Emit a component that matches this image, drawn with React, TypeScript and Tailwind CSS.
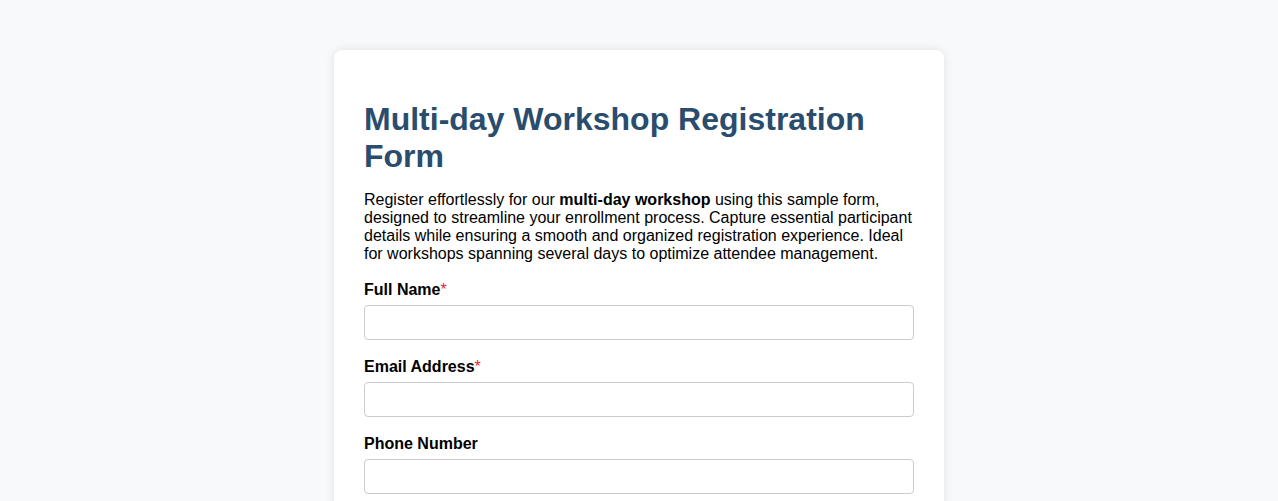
const fields = [
  { label: 'Full Name', required: true, type: 'text' },
  { label: 'Email Address', required: true, type: 'email' },
  { label: 'Phone Number', required: false, type: 'tel' },
];

const App = () => {
  return (
    <div className="min-h-screen bg-[#f8f9fa] pt-[50px] pb-10 font-['Liberation_Sans',Arial,sans-serif] text-black">
      <div className="w-[610px] mx-auto bg-white rounded-lg p-[30px] shadow-[0_0_10px_rgba(0,0,0,0.1)]">
        <h1 className="text-[32px] leading-[37px] font-bold text-[#2a4d6d] mt-[21px] mb-[16px]">
          Multi-day Workshop Registration Form
        </h1>
        <p className="text-base leading-[18px] mb-[17px]">
          Register effortlessly for our <strong>multi-day workshop</strong> using this sample form,
          designed to streamline your enrollment process. Capture essential participant details
          while ensuring a smooth and organized registration experience. Ideal for workshops
          spanning several days to optimize attendee management.
        </p>

        {fields.map((f) => (
          <div key={f.label} className="mb-[17px]">
            <label className="block text-base leading-[18px] font-bold pt-[1px] mb-[6px]">
              {f.label}
              {f.required && <span className="text-[#e3262f] font-normal">*</span>}
            </label>
            <input
              type={f.type}
              className="block w-full h-[35px] border border-[#cccccc] rounded px-2 text-base outline-none"
            />
          </div>
        ))}
      </div>
    </div>
  );
};

export default App;
